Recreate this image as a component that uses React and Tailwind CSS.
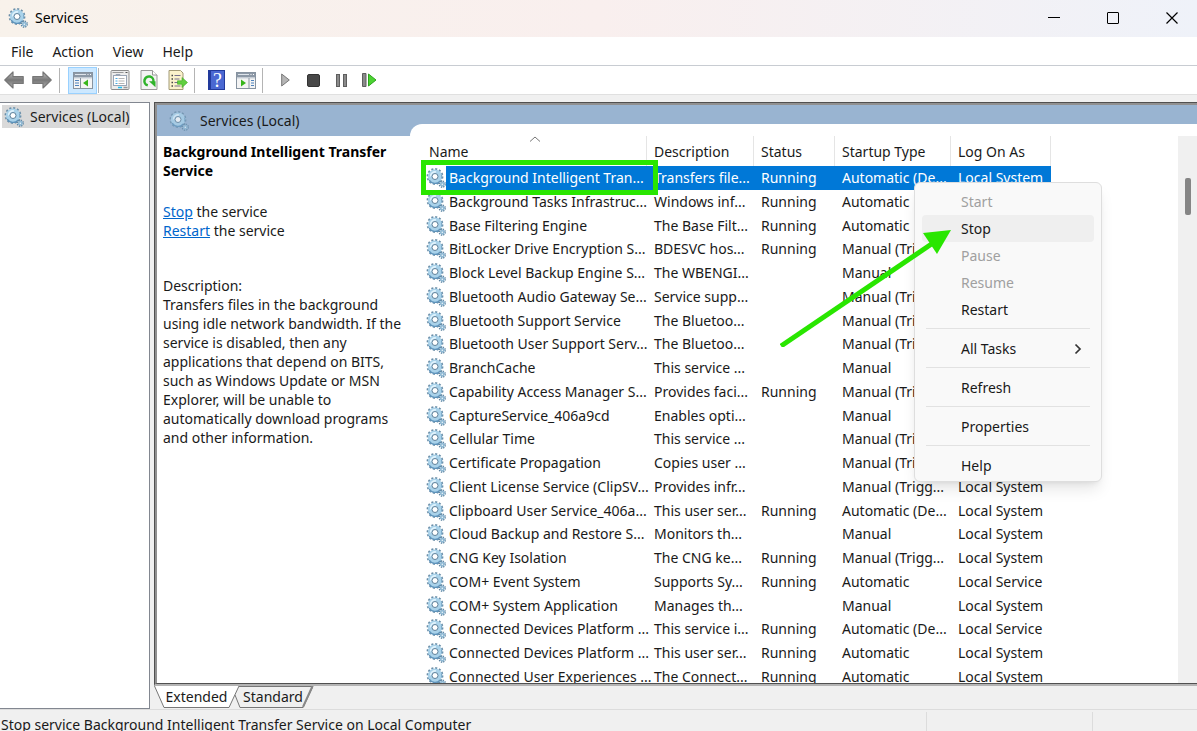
import React from 'react';

const services = [
  ['Background Intelligent Tran...', 'Transfers file...', 'Running', 'Automatic (De...', 'Local System'],
  ['Background Tasks Infrastruc...', 'Windows inf...', 'Running', 'Automatic', 'Local System'],
  ['Base Filtering Engine', 'The Base Filt...', 'Running', 'Automatic', 'Local Service'],
  ['BitLocker Drive Encryption S...', 'BDESVC hos...', 'Running', 'Manual (Trigg...', 'Local System'],
  ['Block Level Backup Engine S...', 'The WBENGI...', '', 'Manual', 'Local System'],
  ['Bluetooth Audio Gateway Se...', 'Service supp...', '', 'Manual (Trigg...', 'Local Service'],
  ['Bluetooth Support Service', 'The Bluetoo...', '', 'Manual (Trigg...', 'Local Service'],
  ['Bluetooth User Support Serv...', 'The Bluetoo...', '', 'Manual (Trigg...', 'Local System'],
  ['BranchCache', 'This service ...', '', 'Manual', 'Network Service'],
  ['Capability Access Manager S...', 'Provides faci...', 'Running', 'Manual (Trigg...', 'Local System'],
  ['CaptureService_406a9cd', 'Enables opti...', '', 'Manual', 'Local System'],
  ['Cellular Time', 'This service ...', '', 'Manual (Trigg...', 'Local Service'],
  ['Certificate Propagation', 'Copies user ...', '', 'Manual (Trigg...', 'Local System'],
  ['Client License Service (ClipSV...', 'Provides infr...', '', 'Manual (Trigg...', 'Local System'],
  ['Clipboard User Service_406a...', 'This user ser...', 'Running', 'Automatic (De...', 'Local System'],
  ['Cloud Backup and Restore S...', 'Monitors th...', '', 'Manual', 'Local System'],
  ['CNG Key Isolation', 'The CNG ke...', 'Running', 'Manual (Trigg...', 'Local System'],
  ['COM+ Event System', 'Supports Sy...', 'Running', 'Automatic', 'Local Service'],
  ['COM+ System Application', 'Manages th...', '', 'Manual', 'Local System'],
  ['Connected Devices Platform ...', 'This service i...', 'Running', 'Automatic (De...', 'Local Service'],
  ['Connected Devices Platform ...', 'This user ser...', 'Running', 'Automatic', 'Local System'],
  ['Connected User Experiences ...', 'The Connect...', 'Running', 'Automatic', 'Local System'],
];

function Gear({ className }) {
  return (
    <svg viewBox="0 0 20 20" className={className} aria-hidden="true">
      <circle cx="9" cy="8.5" r="7.3" fill="none" stroke="#6a8ea8" strokeWidth="2.2" strokeDasharray="2 1.82" />
      <circle cx="9" cy="8.500" r="5" fill="#fff" stroke="#a9d2ea" strokeWidth="4.200" />
      <path d="M3.200 12.200a6.800 6.800 0 0 0 11 .8" fill="none" stroke="#5e93bb" strokeWidth="1.300" />
      <path d="M15.500 6.500a6.800 6.800 0 0 1 0 4" fill="none" stroke="#7ba9c8" strokeWidth="1.200" />
      <path d="M4.600 8.500A4.500 4.500 0 0 1 10 4" fill="none" stroke="#dff2fc" strokeWidth="1.600" />
      <circle cx="9" cy="8.500" r="3" fill="#fff" stroke="#5b7f9a" strokeWidth="1" />
      <circle cx="16.300" cy="16.200" r="2.900" fill="none" stroke="#5f86a3" strokeWidth="1.600" strokeDasharray="1.300 .98" />
      <circle cx="16.300" cy="16.200" r="1.600" fill="#eef7fc" stroke="#8fb9d4" strokeWidth="1.700" />
    </svg>
  );
}

function ToolButton({ label, active, narrow, children }) {
  return (
    <button
      aria-label={label}
      className={`h-[27px] flex items-center justify-center ${narrow ? 'w-7' : 'w-[29px]'} ${
        active ? 'bg-[#cce8ff] border border-[#99d1ff]' : ''
      }`}
    >
      {children}
    </button>
  );
}

function Separator() {
  return <span className="w-px h-[25px] bg-[#b4b4b4]" />;
}

function BackArrow({ flip }) {
  return (
    <svg viewBox="0 0 20 18" className={`w-5 h-[18px] ${flip ? '-scale-x-100' : ''}`}>
      <defs>
        <linearGradient id="arrow" x1="0" y1="0" x2="0" y2="1">
          <stop offset="0" stopColor="#c4c4c4" />
          <stop offset=".5" stopColor="#777" />
          <stop offset="1" stopColor="#b0b0b0" />
        </linearGradient>
      </defs>
      <path d="M.8 9 9 1v4.600h10.200v6.800H9V17z" fill="url(#arrow)" stroke="#777" strokeWidth="1.200" strokeLinejoin="round" />
    </svg>
  );
}

function PaneIcon({ flip }) {
  return (
    <svg viewBox="0 0 20 17" className="w-5 h-[17px]">
      <rect x=".5" y=".5" width="19" height="16" fill="#f4f4f4" stroke="#8793a0" />
      <rect x="1" y="1" width="18" height="4.500" fill="#8c98a6" />
      <path d="M2 2.500h11" stroke="#dfe5eb" />
      <path d="M14.500 2.500h1M17 2.500h1" stroke="#fff" />
      <path d="M1 6h18" stroke="#c9d1d9" />
      {flip ? (
        <>
          <path d="M13 6v10" stroke="#8793a0" />
          <path d="M15 8.500h3M15 11h3M15 13.500h3" stroke="#4f83bd" />
          <path d="M5 7.500v7l5-3.500z" fill="#38b51b" />
        </>
      ) : (
        <>
          <path d="M7.500 6v10" stroke="#8793a0" />
          <path d="M2 8.500h4M2 11h4M2 13.500h4" stroke="#4f83bd" />
          <path d="M15 7.500v7L10 11z" fill="#38b51b" />
        </>
      )}
    </svg>
  );
}

function PropertiesIcon() {
  return (
    <svg viewBox="0 0 20 20" className="w-5 h-5">
      <rect x="1" y=".5" width="18" height="19" rx="1" fill="#ececec" stroke="#8c8c8c" />
      <path d="M2.500 2.500h11" stroke="#999" />
      <path d="M15.500 2.500h2" stroke="#555" />
      <rect x="3.500" y="5.500" width="13" height="10" fill="#fff" stroke="#9aa5b5" />
      <path d="M6 5.500v-1h4v1" fill="none" stroke="#9aa5b5" />
      <path d="M5.500 8.500h2M5.500 11h2M5.500 13.500h2" stroke="#4aa8e0" />
      <path d="M8.500 8.500h6M8.500 11h6M8.500 13.500h6" stroke="#b4b4b4" />
      <path d="M8 17.500h4" stroke="#22bdf0" strokeWidth="1.500" />
      <path d="M13.500 17.500h4" stroke="#999" strokeWidth="1.500" />
    </svg>
  );
}

function RefreshIcon() {
  return (
    <svg viewBox="0 0 18 20" className="w-[18px] h-5">
      <path d="M1 .5h11.500L17 5v14.500H1z" fill="#f3f3f3" stroke="#999" />
      <path d="M12.500.5V5H17" fill="#fff" stroke="#999" />
      <path d="M7.800 15.300A4.500 4.500 0 1 1 13.300 12" fill="none" stroke="#2fb32b" strokeWidth="2.500" />
      <path d="M9 11.300h6.500v6z" fill="#2fb32b" />
    </svg>
  );
}

function ExportIcon() {
  return (
    <svg viewBox="0 0 20 20" className="w-5 h-5">
      <path d="M1 .5h11.500L15 3v16.500H1z" fill="#fbf2cb" stroke="#a39a76" />
      <path d="M3.500 5.500h1.500M3.500 9h1.500M3.500 12.500h1.500M3.500 16h1.500" stroke="#444" strokeWidth="1.300" />
      <path d="M6.500 5.500h6M6.500 9h5M6.500 12.500h4M6.500 16h6" stroke="#77708d" />
      <path d="M9.500 10.800h4.500V7.500l5.500 5-5.500 5v-3.300H9.500z" fill="#62cf3f" stroke="#3da825" strokeWidth=".6" />
    </svg>
  );
}

function HelpIcon() {
  return (
    <span className="w-[17px] h-5 bg-[#4a68d2] border border-l-3 border-[#223a9c] flex items-center justify-center text-white text-xl leading-none font-['Liberation_Serif',serif]">
      ?
    </span>
  );
}

function Toolbar() {
  return (
    <div className="h-[29px] shrink-0 bg-white border-b border-[#e0e0e0] flex items-center">
      <ToolButton label="Back" narrow><BackArrow /></ToolButton>
      <ToolButton label="Forward" narrow><BackArrow flip /></ToolButton>
      <div className="flex items-center ml-[3px] gap-2">
        <Separator />
        <ToolButton label="Show/Hide Console Tree" active><PaneIcon /></ToolButton>
      </div>
      <div className="flex items-center ml-px">
        <Separator />
      </div>
      <div className="flex items-center ml-1.5">
        <ToolButton label="Properties"><PropertiesIcon /></ToolButton>
        <ToolButton label="Refresh"><RefreshIcon /></ToolButton>
        <ToolButton label="Export List"><ExportIcon /></ToolButton>
      </div>
      <div className="flex items-center ml-0.5 gap-[7px]">
        <Separator />
        <ToolButton label="Help"><HelpIcon /></ToolButton>
      </div>
      <ToolButton label="Show/Hide Action Pane"><PaneIcon flip /></ToolButton>
      <div className="flex items-center ml-0.5 gap-2">
        <Separator />
        <ToolButton label="Start Service" narrow>
          <svg viewBox="0 0 9 14" className="w-[9px] h-3.5">
            <path d="M.7 1v12L8.300 7z" fill="#b5b5b5" stroke="#777" />
          </svg>
        </ToolButton>
      </div>
      <ToolButton label="Stop Service" narrow>
        <span className="w-[13px] h-[13px] rounded-xs bg-[#484848] border border-[#333]" />
      </ToolButton>
      <ToolButton label="Pause Service" narrow>
        <span className="flex gap-[3px]">
          <span className="w-1 h-[13px] bg-[#8a8a8a] border border-[#5e5e5e]" />
          <span className="w-1 h-[13px] bg-[#8a8a8a] border border-[#5e5e5e]" />
        </span>
      </ToolButton>
      <ToolButton label="Restart Service">
        <svg viewBox="0 0 15 14" className="w-[15px] h-3.5">
          <path d="M.5.5h3.500v13H.5z" fill="#8a8a8a" stroke="#5e5e5e" />
          <path d="M6.500 1v12L14 7z" fill="#4cd332" stroke="#2ca51b" />
        </svg>
      </ToolButton>
    </div>
  );
}

function MenuItem({ label, disabled, highlighted, submenu }) {
  return (
    <li>
      <button
        disabled={disabled}
        className={`w-full h-[27px] pl-[39px] pr-3 flex items-center justify-between rounded text-left ${
          disabled ? 'text-[#a0a0a0]' : 'text-[#1a1a1a]'
        } ${highlighted ? 'bg-[#efefef]' : ''}`}
      >
        {label}
        {submenu && (
          <svg viewBox="0 0 8 12" className="w-2 h-3">
            <path d="m1.500 1.500 4.500 4.500-4.500 4.500" fill="none" stroke="#333" strokeWidth="1.700" />
          </svg>
        )}
      </button>
    </li>
  );
}

function Divider() {
  return <li className="h-px mx-1 mt-[5px] mb-1.5 bg-[#e2e2e2]" />;
}

function ContextMenu() {
  return (
    <ul className="absolute left-[504px] top-[58px] w-[188px] h-[300px] px-[7px] pt-[5px] bg-[#f9f9f9] border border-[#dedede] rounded-md shadow-lg text-sm">
      <MenuItem label="Start" disabled />
      <MenuItem label="Stop" highlighted />
      <MenuItem label="Pause" disabled />
      <MenuItem label="Resume" disabled />
      <MenuItem label="Restart" />
      <Divider />
      <MenuItem label="All Tasks" submenu />
      <Divider />
      <MenuItem label="Refresh" />
      <Divider />
      <MenuItem label="Properties" />
      <Divider />
      <MenuItem label="Help" />
    </ul>
  );
}

function ServiceTable() {
  const head = 'pl-[7px] pb-0.5 pt-1 font-normal text-left border-r border-[#e5e5e5]';
  return (
    <table className="w-[631px] ml-2.5 table-fixed border-separate border-spacing-0 whitespace-nowrap">
      <colgroup>
        <col className="w-[227px]" />
        <col className="w-[107px]" />
        <col className="w-[81px]" />
        <col className="w-[116px]" />
        <col className="w-[100px]" />
      </colgroup>
      <thead>
        <tr className="h-[30px]">
          <th className="relative pl-[9px] pb-0.5 pt-1 font-normal text-left border-r border-[#e5e5e5]">
            Name
            <svg viewBox="0 0 12 6" className="absolute left-[109px] top-0 w-3 h-1.5">
              <path d="m1 5.500 5-4.500 5 4.500" fill="none" stroke="#777" />
            </svg>
          </th>
          <th className={head}>Description</th>
          <th className={head}>Status</th>
          <th className={head}>Startup Type</th>
          <th className={head}>Log On As</th>
        </tr>
      </thead>
      <tbody>
        {services.map(([name, description, status, startup, logOn], i) => {
          const selected = i === 0;
          const cell = `p-0 pl-[7px] ${selected ? 'bg-[#0078d7] text-white' : ''}`;
          return (
            <tr key={i} className="h-6 nth-[4n+3]:h-[23px]">
              <td className="p-0">
                <div className={`flex items-center pl-1.5 ${selected ? 'h-6' : 'h-[23px]'}`}>
                  <Gear className="w-5 h-5 shrink-0" />
                  <span className={`flex-1 h-full flex items-center pl-[3px] ${selected ? 'bg-[#0078d7] text-white' : ''}`}>
                    {name}
                  </span>
                </div>
              </td>
              <td className={cell}>{description}</td>
              <td className={cell}>{status}</td>
              <td className={cell}>{startup}</td>
              <td className={cell}>{logOn}</td>
            </tr>
          );
        })}
      </tbody>
    </table>
  );
}

function DetailPane() {
  return (
    <div className="w-[253px] shrink-0 pt-1.5 px-1.5 leading-[19px]">
      <h2 className="font-bold text-black">Background Intelligent Transfer Service</h2>
      <div className="mt-[22px]">
        <p><a href="#stop" className="text-[#0066cc] underline">Stop</a> the service</p>
        <p><a href="#restart" className="text-[#0066cc] underline">Restart</a> the service</p>
      </div>
      <div className="mt-9">
        <p>Description:</p>
        <p>
          Transfers files in the background using idle network bandwidth. If the service is disabled, then any
          applications that depend on BITS, such as Windows Update or MSN Explorer, will be unable to
          automatically download programs and other information.
        </p>
      </div>
    </div>
  );
}

function Annotations() {
  return (
    <>
      <div className="absolute left-[11px] top-[36px] w-[237px] h-[35px] border-5 border-[#29e600]" />
      <svg viewBox="0 0 172 118" className="absolute left-[370px] top-[105px] w-[172px] h-[118px]">
        <path d="m1 117 152-103" stroke="#29e600" strokeWidth="5" />
        <path d="m171 1-28 3 14 21z" fill="#29e600" />
      </svg>
    </>
  );
}

function ViewTabs() {
  return (
    <div className="h-[22px] shrink-0 flex">
      <button className="relative w-[81px] h-full">
        <svg viewBox="0 0 86 22" className="absolute left-0 top-0 w-[86px] h-[22px]">
          <path d="M.5 0 10 21.500h65L85 0z" fill="#fff" />
          <path d="M.5 0 10 21.500h65L85 0" fill="none" stroke="#777" />
        </svg>
        <span className="relative pl-1">Extended</span>
      </button>
      <button className="relative w-[78px] h-full">
        <svg viewBox="0 0 80 22" className="absolute left-0 top-0 w-20 h-[22px]">
          <path d="m0 9 5 12.500h63L78 .5H4" fill="none" stroke="#777" />
          <path d="m68 21 9.500-21" stroke="#888" strokeWidth="2" />
        </svg>
        <span className="relative pr-0.5">Standard</span>
      </button>
    </div>
  );
}

export default function App() {
  return (
    <div className="h-screen flex flex-col overflow-hidden bg-[#f0f0f0] text-[#1a1a1a] text-sm font-['Noto_Sans','Open_Sans',sans-serif]">
      <header className="h-[37px] shrink-0 flex items-center pl-2 pb-0.5 bg-linear-to-r from-[#f8f2eb] via-[#f9efee] to-[#eff2f9]">
        <Gear className="w-5 h-5" />
        <h1 className="ml-[7px] text-black">Services</h1>
        <div className="ml-auto mr-px flex h-full gap-[11px]">
          <button aria-label="Minimize" className="w-12 flex items-center justify-center">
            <span className="w-3 h-px bg-black" />
          </button>
          <button aria-label="Maximize" className="w-12 flex items-center justify-center">
            <span className="w-3 h-3 border border-black rounded-[1px]" />
          </button>
          <button aria-label="Close" className="w-12 flex items-center justify-center">
            <svg viewBox="0 0 12 12" className="w-3 h-3">
              <path d="m.5.5 11 11m0-11-11 11" stroke="#000" strokeWidth="1.200" />
            </svg>
          </button>
        </div>
      </header>

      <nav className="h-[29px] shrink-0 bg-white border-b border-[#c8ccd2] flex items-center pt-px pl-[11px] gap-[19px]">
        <button>File</button>
        <button>Action</button>
        <button>View</button>
        <button>Help</button>
      </nav>

      <Toolbar />

      <main className="flex-1 min-h-0 flex gap-1 pt-[7px]">
        <aside className="w-[150px] shrink-0 bg-white border border-l-0 border-[#828790] pt-0.5 pl-0.5">
          <button className="h-[23px] w-32 bg-[#d9d9d9] flex items-center gap-1.5 pl-0.5 whitespace-nowrap">
            <Gear className="w-5 h-5 shrink-0" />
            Services (Local)
          </button>
        </aside>

        <div className="flex-1 min-w-0 flex flex-col">
          <section className="flex-1 min-h-0 flex flex-col border-t border-l border-b-2 border-t-[#505050] border-l-[#505050] border-b-[#b4b4b4] bg-white">
            <div className="h-full border-t-2 border-l-2 border-b border-t-[#909090] border-l-[#909090] border-b-[#505050] flex flex-col min-h-0">
              <div className="h-[19px] shrink-0 bg-[#99b4d1]" />
              <div className="flex-1 min-h-0 flex">
                <div className="w-[253px] shrink-0 flex flex-col">
                  <div className="relative h-3 shrink-0 bg-[#99b4d1]">
                    <div className="absolute left-3 bottom-[5px] flex items-center gap-[11px] leading-5">
                      <Gear className="w-5 h-5 opacity-75" />
                      Services (Local)
                    </div>
                  </div>
                  <DetailPane />
                </div>
                <div className="relative flex-1 min-w-0 flex bg-[#99b4d1]">
                  <div className="flex-1 min-w-0 flex bg-white rounded-tl-xl pt-3">
                    <div className="flex-1 min-w-0 overflow-hidden">
                      <ServiceTable />
                    </div>
                    <div className="w-[19px] shrink-0 bg-[#f0f0f0] pt-[42px] pl-[7px]">
                      <div className="w-1.5 h-[37px] rounded-xs bg-[#858585]" />
                    </div>
                  </div>
                  <ContextMenu />
                  <Annotations />
                </div>
              </div>
            </div>
          </section>
          <ViewTabs />
          <div className="h-px shrink-0" />
        </div>
      </main>

      <footer className="h-[22px] shrink-0 overflow-hidden border-t border-[#dcdcdc] flex leading-[30px] whitespace-nowrap">
        <p className="flex-1 pl-px">Stop service Background Intelligent Transfer Service on Local Computer</p>
        <div className="w-[166px] mt-0.5 border-l border-[#dcdcdc]" />
        <div className="w-[105px] mt-0.5 border-l border-[#dcdcdc]" />
      </footer>
    </div>
  );
}
